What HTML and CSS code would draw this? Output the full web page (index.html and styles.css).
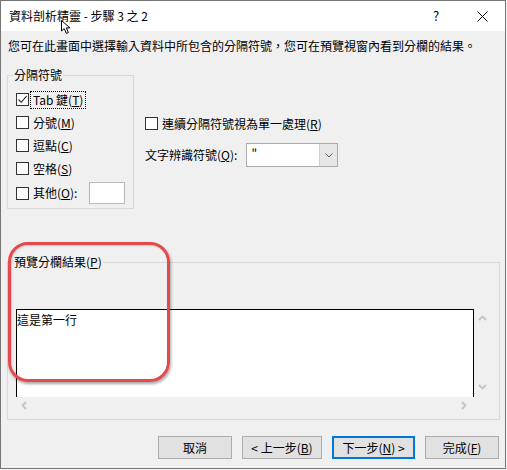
FILE: index.html
```html
<!DOCTYPE html>
<html lang="zh-Hant">
<head>
<meta charset="utf-8">
<title>資料剖析精靈</title>
<link rel="stylesheet" href="styles.css">
</head>
<body>
<div class="window">
  <div class="titlebar">
    <span class="title">資料剖析精靈 - 步驟 3 之 2</span>
    <span class="help">?</span>
    <span class="close"><svg width="11" height="11" viewBox="0 0 11 11"><path d="M0.5 0.5 L10.5 10.5 M10.5 0.5 L0.5 10.5" stroke="#000" stroke-width="1" fill="none"/></svg></span>
  </div>
  <div class="content">
    <p class="desc">您可在此畫面中選擇輸入資料中所包含的分隔符號，您可在預覽視窗內看到分欄的結果。</p>
    <div class="options">
      <fieldset class="group delims">
        <legend>分隔符號</legend>
        <label class="check"><span class="box"><svg width="11" height="11" viewBox="0 0 11 11"><path d="M1.5 5.5 L4.2 8.3 L9.6 2.2" stroke="#222" stroke-width="1.1" fill="none"/></svg></span><span class="lbl focus">Tab 鍵(<u>T</u>)</span></label>
        <label class="check"><span class="box"></span><span class="lbl">分號(<u>M</u>)</span></label>
        <label class="check"><span class="box"></span><span class="lbl">逗點(<u>C</u>)</span></label>
        <label class="check"><span class="box"></span><span class="lbl">空格(<u>S</u>)</span></label>
        <label class="check other"><span class="box"></span><span class="lbl">其他(<u>O</u>):</span><span class="textbox"></span></label>
      </fieldset>
      <div class="right">
        <label class="check"><span class="box"></span><span class="lbl">連續分隔符號視為單一處理(<u>R</u>)</span></label>
        <div class="qualifier">
          <span>文字辨識符號(<u>Q</u>):</span>
          <div class="combo"><span class="value">"</span><span class="drop"><svg width="8" height="5" viewBox="0 0 8 5"><path d="M0.5 0.5 L4 4 L7.5 0.5" stroke="#606060" stroke-width="1" fill="none"/></svg></span></div>
        </div>
      </div>
    </div>
    <fieldset class="group preview">
      <legend>預覽分欄結果(<u>P</u>)</legend>
      <div class="grid">
        <div class="viewport">這是第一行</div>
        <div class="vscroll">
          <svg width="9" height="6" viewBox="0 0 9 6"><path d="M1 5 L4.5 1.5 L8 5" stroke="#c4c4c4" stroke-width="1.8" fill="none"/></svg>
          <svg width="9" height="6" viewBox="0 0 9 6"><path d="M1 1 L4.5 4.5 L8 1" stroke="#c4c4c4" stroke-width="1.8" fill="none"/></svg>
        </div>
        <div class="hscroll">
          <svg width="6" height="9" viewBox="0 0 6 9"><path d="M5 1 L1.5 4.5 L5 8" stroke="#c4c4c4" stroke-width="1.8" fill="none"/></svg>
          <svg width="6" height="9" viewBox="0 0 6 9"><path d="M1 1 L4.5 4.5 L1 8" stroke="#c4c4c4" stroke-width="1.8" fill="none"/></svg>
        </div>
        <div class="corner"></div>
      </div>
    </fieldset>
    <div class="buttons">
      <button class="btn w74">取消</button>
      <button class="btn w80">&lt; 上一步(<u>B</u>)</button>
      <button class="btn w83 default">下一步(<u>N</u>) &gt;</button>
      <button class="btn w74">完成(<u>F</u>)</button>
    </div>
  </div>
  <div class="annotation"></div>
  <svg class="cursor" width="12" height="15" viewBox="0 0 12 15"><path d="M0.5 0.5 V11 L3.2 8.6 L5.4 13.4 L7.4 12.5 L5.3 7.9 H9 Z" fill="#fff" stroke="#000" stroke-width="1" stroke-linejoin="round"/></svg>
</div>
</body>
</html>
```
FILE: styles.css
```css
html, body {
  margin: 0;
  padding: 0;
  background: #f3f3f3;
}
body {
  font-family: "Noto Sans CJK TC", "Noto Sans", sans-serif;
  font-size: 12px;
  line-height: 16px;
  color: #000;
}
u {
  text-decoration: underline;
  text-underline-offset: 1px;
}
.window {
  position: relative;
  width: 506px;
  height: 469px;
  box-sizing: border-box;
  border: 1px solid #767676;
  background: #f0f0f0;
  display: flex;
  flex-direction: column;
}
.titlebar {
  height: 30px;
  background: #fff;
  display: flex;
  align-items: center;
  flex: none;
}
.title {
  padding-left: 8px;
  flex: 1;
}
.help {
  width: 46px;
  text-align: center;
  font-size: 13px;
}
.close {
  width: 46px;
  display: flex;
  justify-content: center;
  align-items: center;
}
.content {
  flex: 1;
  padding: 0 6px;
  display: flex;
  flex-direction: column;
}
.desc {
  margin: 7px 0 0 1px;
  white-space: nowrap;
}
.options {
  display: flex;
  margin-top: 13px;
}
.group {
  margin: 0;
  border: 1px solid #d9d9d9;
  box-sizing: border-box;
  min-width: 0;
}
.group legend {
  padding: 0 1px;
  margin-left: -3px;
  line-height: 16px;
}
.delims {
  width: 127px;
  padding: 5px 6px 2px 8px;
}
.check {
  display: flex;
  align-items: center;
  height: 23px;
  white-space: nowrap;
}
.box {
  width: 13px;
  height: 13px;
  box-sizing: border-box;
  border: 1px solid #333;
  background: #fff;
  flex: none;
  display: flex;
  align-items: center;
  justify-content: center;
}
.lbl {
  margin-left: 4px;
}
.lbl.focus {
  margin-left: 2px;
  padding: 0 2px;
  outline: 1px dotted #000;
  outline-offset: 0;
  line-height: 16px;
}
.check.other {
  height: 26px;
}
.textbox {
  width: 36px;
  height: 22px;
  flex: none;
  box-sizing: border-box;
  border: 1px solid #b9b9b9;
  background: #fff;
  margin-left: 12px;
}
.right {
  margin-left: 11px;
  padding-top: 45px;
}
.qualifier {
  display: flex;
  align-items: center;
  margin-top: 8px;
  height: 24px;
  white-space: nowrap;
}
.combo {
  margin-left: 9px;
  width: 92px;
  height: 24px;
  box-sizing: border-box;
  border: 1px solid #acacac;
  background: #fff;
  display: flex;
}
.value {
  flex: 1;
  padding-left: 4px;
  line-height: 20px;
}
.drop {
  width: 17px;
  background: #e6e6e6;
  border-left: 1px solid #cfcfcf;
  display: flex;
  align-items: center;
  justify-content: center;
}
.preview {
  margin-top: 45px;
  width: 493px;
  padding: 39px 8px 5px 8px;
}
.grid {
  display: grid;
  grid-template-columns: 458px 17px;
  grid-template-rows: 88px 17px;
}
.viewport {
  background: #fff;
  border: 1px solid #000;
  border-bottom: none;
  padding: 2px 0 0 0;
  box-sizing: border-box;
}
.vscroll {
  display: flex;
  flex-direction: column;
  justify-content: space-between;
  align-items: center;
  padding: 6px 0 7px;
}
.hscroll {
  display: flex;
  justify-content: space-between;
  align-items: center;
  padding: 0 7px 0 5px;
}
.buttons {
  display: flex;
  justify-content: flex-end;
  gap: 10px;
  margin-top: 16px;
}
.btn {
  height: 23px;
  box-sizing: border-box;
  border: 1px solid #adadad;
  background: #e1e1e1;
  font-family: inherit;
  font-size: 12px;
  line-height: 16px;
  color: #000;
  padding: 0;
}
.btn.default {
  border: 2px solid #0078d7;
}
.w74 { width: 74px; }
.w80 { width: 80px; }
.w83 { width: 83px; }
.annotation {
  position: absolute;
  left: 7px;
  top: 241px;
  width: 162px;
  height: 140px;
  box-sizing: border-box;
  border: 3.5px solid #e24a4e;
  border-radius: 20px;
  box-shadow: 1px 2px 3px rgba(0, 0, 0, 0.35), inset 1px 1px 2px rgba(0, 0, 0, 0.15);
  pointer-events: none;
}
.cursor {
  position: absolute;
  left: 60px;
  top: 19px;
}
```
